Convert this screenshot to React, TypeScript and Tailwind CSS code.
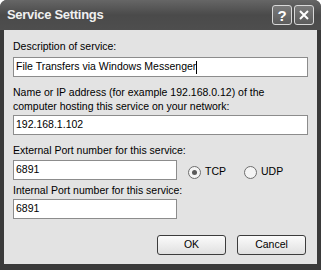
import React from 'react';

function Field({ value, caret, width }: { value: string; caret?: boolean; width: string }) {
  return (
    <div className={`${width} h-[20px] bg-white border border-[#8c8c8c] flex items-center px-[2px] text-[10.5px] text-black`}>
      <span>{value}</span>
      {caret && <span className="w-px h-[13px] bg-black" />}
    </div>
  );
}

function Radio({ label, checked }: { label: string; checked?: boolean }) {
  return (
    <div className="flex items-center gap-[4px]">
      <div className="w-[13px] h-[13px] rounded-full border border-[#6e6e6e] bg-[#f4f4f4] flex items-center justify-center">
        {checked && <div className="w-[5px] h-[5px] rounded-full bg-[#5a5a5a]" />}
      </div>
      <span className="text-[10.5px] text-black">{label}</span>
    </div>
  );
}

function TitleButton({ children }: { children: React.ReactNode }) {
  return (
    <div className="w-[20px] h-[20px] rounded-[3px] border border-[#d8d8d8] bg-gradient-to-b from-[#7a7a7a] to-[#5c5c5c] flex items-center justify-center text-white">
      {children}
    </div>
  );
}

export default function App() {
  return (
    <div className="w-[321px] h-[270px] bg-[#3a3a3a] rounded-t-[7px] flex flex-col overflow-hidden" style={{ fontFamily: '"Liberation Sans", Arial, sans-serif' }}>
      {/* Title bar */}
      <div className="h-[30px] shrink-0 flex items-center pl-[7px] pr-[7px] bg-gradient-to-b from-[#666666] via-[#4a4a4a] to-[#4e4e4e]">
        <span className="flex-1 text-[#f0f0f0] font-bold text-[13px] tracking-[-0.3px]">Service Settings</span>
        <div className="flex gap-[2px]">
          <TitleButton>
            <span className="font-bold text-[15px] leading-none">?</span>
          </TitleButton>
          <TitleButton>
            <svg width="12" height="12" viewBox="0 0 12 12">
              <path d="M2 2 L10 10 M10 2 L2 10" stroke="white" strokeWidth="2" />
            </svg>
          </TitleButton>
        </div>
      </div>

      {/* Body */}
      <div className="flex-1 mx-[4px] mb-[6px] bg-[#e3e3e3] pt-[9px] px-[9px] text-[10.5px] text-black">
        <div className="leading-[14px]">Description of service:</div>
        <div className="mt-[4px]">
          <Field value="File Transfers via Windows Messenger" caret width="w-[295px]" />
        </div>
        <div className="mt-[8px] leading-[14px]">
          Name or IP address (for example 192.168.0.12) of the
          <br />
          computer hosting this service on your network:
        </div>
        <div className="mt-[2px]">
          <Field value="192.168.1.102" width="w-[295px]" />
        </div>
        <div className="mt-[8px] leading-[14px]">External Port number for this service:</div>
        <div className="mt-[3px] flex items-center">
          <Field value="6891" width="w-[164px]" />
          <div className="ml-[11px] flex items-center gap-[18px] mt-[4px]">
            <Radio label="TCP" checked />
            <Radio label="UDP" />
          </div>
        </div>
        <div className="mt-[3px] leading-[14px]">Internal Port number for this service:</div>
        <div className="mt-[2px]">
          <Field value="6891" width="w-[164px]" />
        </div>
        <div className="mt-[16px] flex justify-end gap-[11px] pr-[2px]">
          <button className="w-[69px] h-[20px] rounded-[3px] border border-[#3c3c3c] bg-gradient-to-b from-[#fbfbfb] to-[#e0e0e0] text-[10.5px] text-black">OK</button>
          <button className="w-[69px] h-[20px] rounded-[3px] border border-[#3c3c3c] bg-gradient-to-b from-[#fbfbfb] to-[#e0e0e0] text-[10.5px] text-black">Cancel</button>
        </div>
      </div>
    </div>
  );
}
